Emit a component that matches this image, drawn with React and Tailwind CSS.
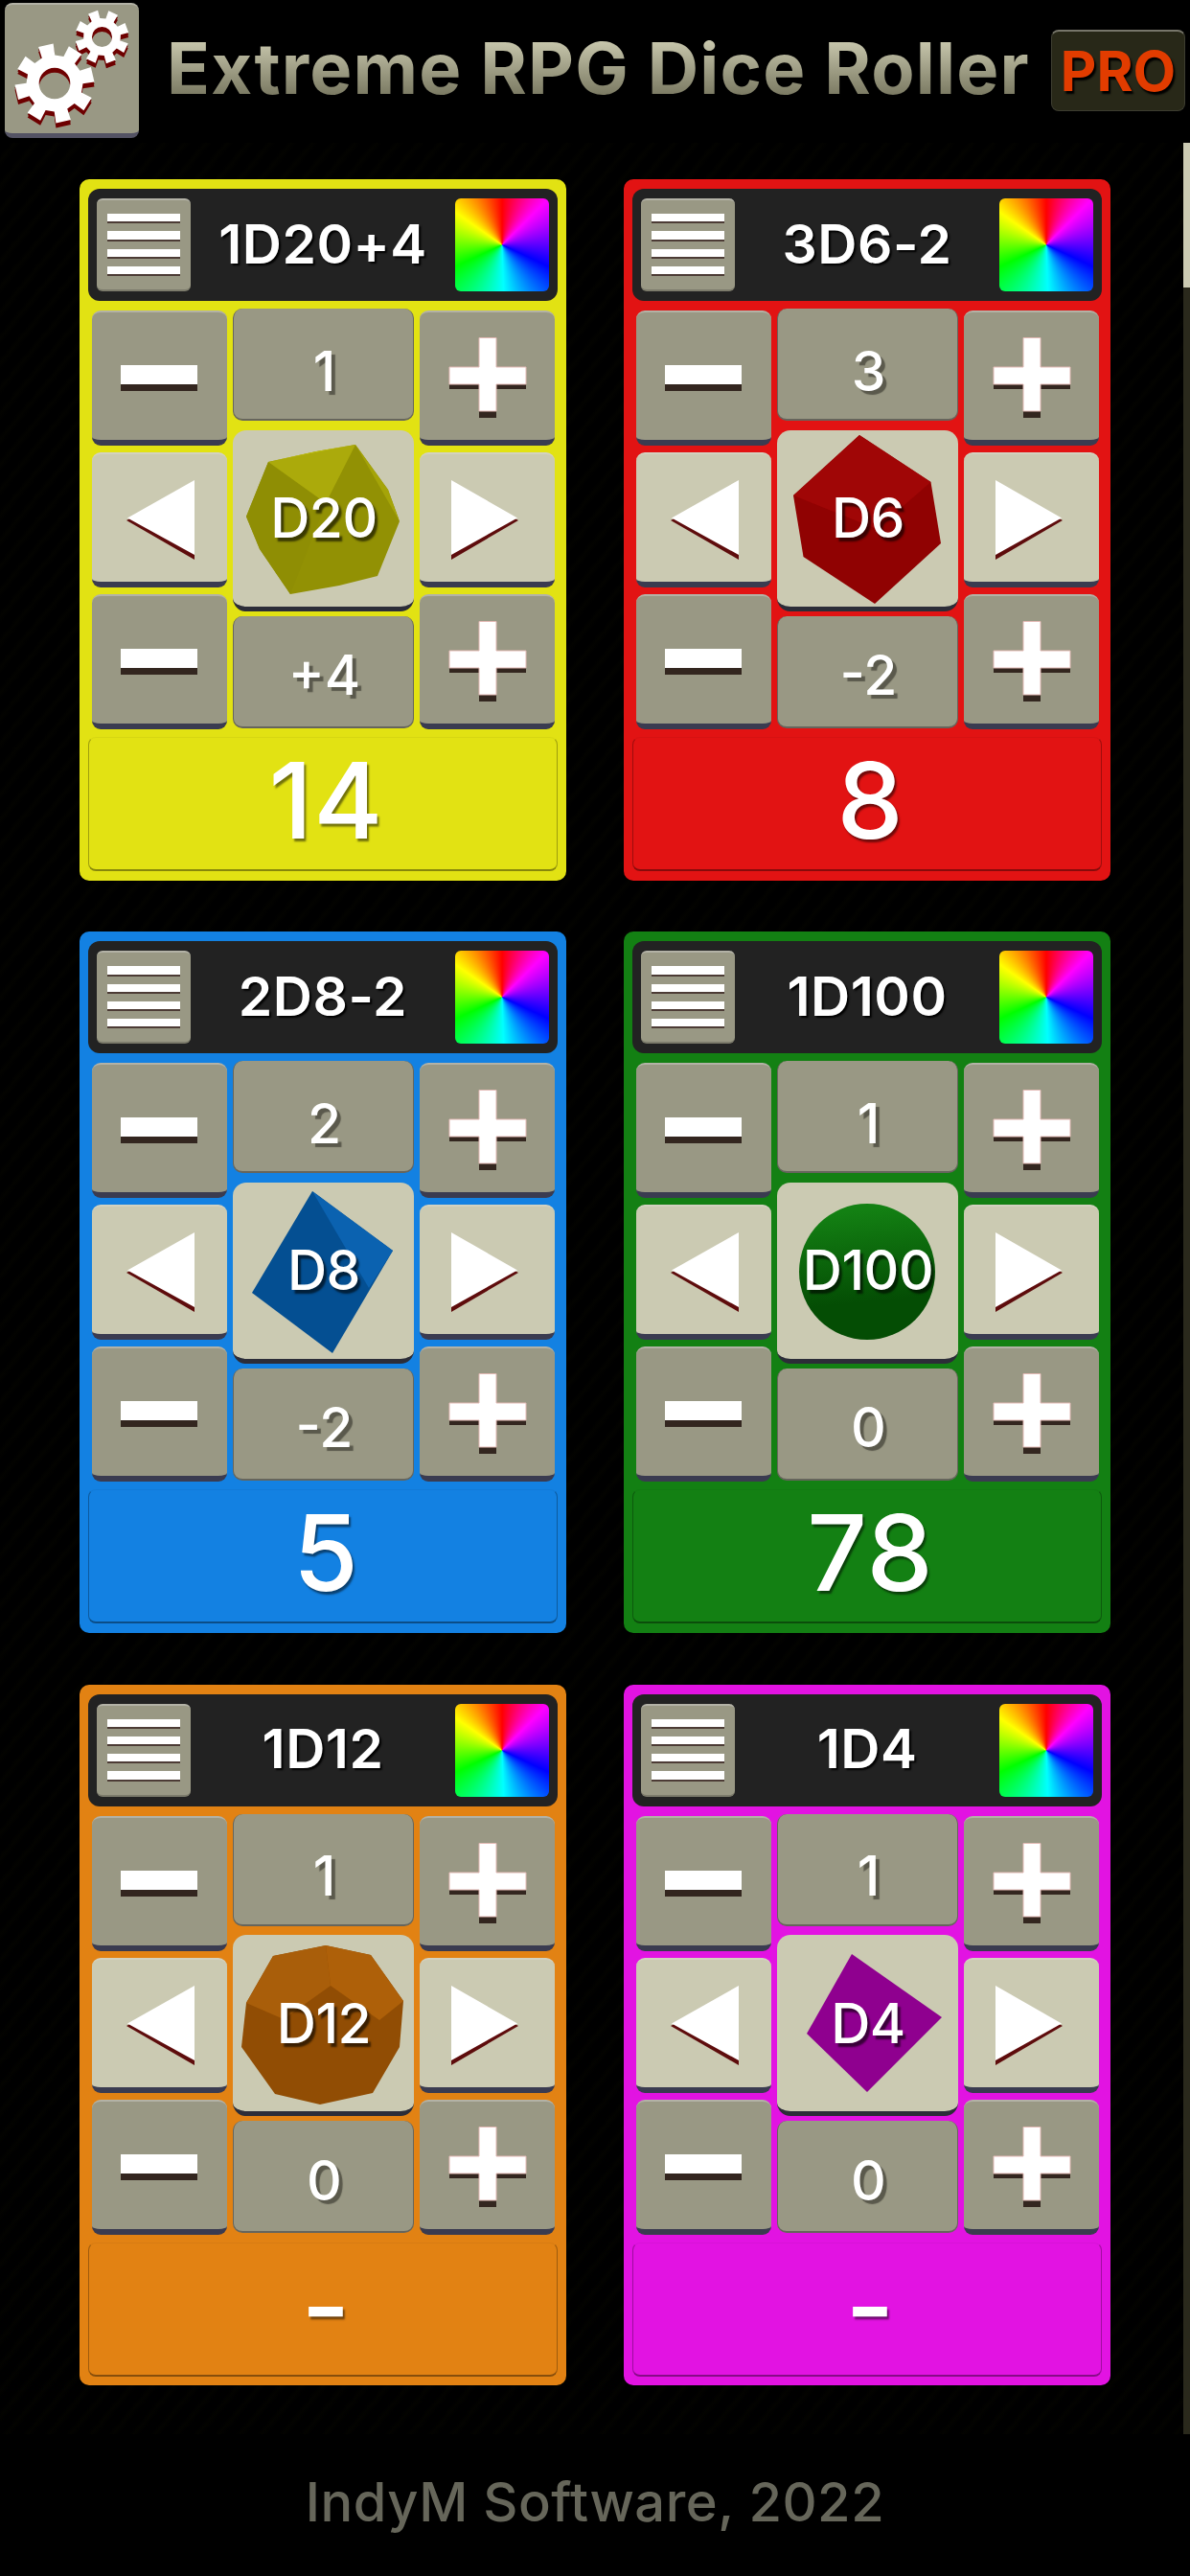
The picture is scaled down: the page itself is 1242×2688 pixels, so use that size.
import React, { useState } from "react";

const initialRollers = [
  { id: 1, name: "1D20+4", count: 1, die: "D20", modifier: "+4", result: "14", color: "#e2e213" },
  { id: 2, name: "3D6-2", count: 3, die: "D6", modifier: "-2", result: "8", color: "#e21313" },
  { id: 3, name: "2D8-2", count: 2, die: "D8", modifier: "-2", result: "5", color: "#1381e2" },
  { id: 4, name: "1D100", count: 1, die: "D100", modifier: "0", result: "78", color: "#138013" },
  { id: 5, name: "1D12", count: 1, die: "D12", modifier: "0", result: "-", color: "#e28213" },
  { id: 6, name: "1D4", count: 1, die: "D4", modifier: "0", result: "-", color: "#e213e2" },
];

// Faces of each die, on a 188 x 188 canvas
const dieFaces = {
  D20: [
    { points: "37,33 87,22 128,15 162,62 174,95 151,152 111,162 60,171 28,124 14,90", fill: "#929104" },
    { points: "37,33 97,76 60,171 28,124 14,90", fill: "#8f8e04" },
    { points: "37,33 128,15 97,76", fill: "#abaa0b" },
    { points: "37,33 87,22 128,15", fill: "#c4c30e" },
    { points: "128,15 162,62 174,95", fill: "#a5a408" },
  ],
  D6: [
    { points: "86,5 160.5,54 171,118 102,181 27.5,132 17,68", fill: "#900202" },
    { points: "86,5 160.5,54 104,103 17,68", fill: "#a00606" },
  ],
  D8: [
    { points: "83,9 167,71 104,178 20,115", fill: "#044f92" },
    { points: "83,9 167,71 142,110", fill: "#0b62b0" },
  ],
  D12: [
    { points: "97,11 144,21 178,69 174,117 146,165 91,177 44,166 9,117 14,71 42,22", fill: "#914d04" },
    { points: "97,11 102,53 53,88 14,71 42,22", fill: "#a95e0a" },
    { points: "97,11 144,21 178,69 153,89 102,53", fill: "#ae6009" },
  ],
  D4: [{ points: "78,20 172,86 94,164 31,103", fill: "#8f008f" }],
};

const Die = ({ type }) => (
  <svg viewBox="0 0 188 188" className="absolute inset-0 w-[188px] h-[188px]">
    {type === "D100" ? (
      <>
        <defs>
          <linearGradient id="sphere" x1="0.45" y1="0" x2="0.55" y2="1">
            <stop offset="0.05" stopColor="#138013" />
            <stop offset="0.72" stopColor="#044d04" />
          </linearGradient>
        </defs>
        <circle cx="94" cy="93" r="71" fill="url(#sphere)" />
      </>
    ) : (
      dieFaces[type].map((face, i) => <polygon key={i} points={face.points} fill={face.fill} />)
    )}
  </svg>
);

// Eight toothed gear with a round hole
const gearPath = (cx, cy, outer, root, hole, phase) => {
  const points = [];
  for (let i = 0; i < 8; i++) {
    const mid = phase + i * 45;
    [[-13.5, root], [-11, outer], [11, outer], [13.5, root]].forEach(([offset, r]) => {
      const a = ((mid + offset) * Math.PI) / 180;
      points.push(`${(cx + r * Math.sin(a)).toFixed(1)} ${(cy - r * Math.cos(a)).toFixed(1)}`);
    });
  }
  return `M${points.join("L")}ZM${cx - hole} ${cy}a${hole} ${hole} 0 1 0 ${hole * 2} 0a${hole} ${hole} 0 1 0 ${-hole * 2} 0Z`;
};

const GearsIcon = () => {
  const d = gearPath(52, 82, 41.5, 29.5, 16.3, -13) + gearPath(101.5, 33.5, 28, 19.5, 10.5, -20);
  return (
    <svg viewBox="0 0 140 134" className="w-[140px] h-[134px]" fillRule="evenodd">
      <path d={d} fill="#6e0000" transform="translate(0 5)" />
      <path d={d} fill="#6e0000" transform="translate(0 2.5)" />
      <path d={d} fill="#fff" />
    </svg>
  );
};

const icons = {
  minus: (
    <>
      <rect x="30" y="70" width="80" height="14" fill="#33261f" />
      <rect x="30" y="57" width="80" height="20" fill="#fff" />
    </>
  ),
  plus: (
    <>
      <path d="M31 66H62V36H80V66H111V82H80V112H62V82H31Z" fill="#33261f" />
      <path d="M31 59H62V28.500H80V59H111V77H80V105H62V77H31Z" fill="#fff" stroke="#e3b9b4" strokeWidth="1" />
    </>
  ),
  prev: (
    <>
      <path d="M36 71L107 34V112Z" fill="#5e0c0c" />
      <path d="M37 68.500L107 29V107Z" fill="#fff" />
    </>
  ),
  next: (
    <>
      <path d="M103 71L33 34V112Z" fill="#5e0c0c" />
      <path d="M102 68.500L33 29V107Z" fill="#fff" />
    </>
  ),
};

const KeyButton = ({ icon, light, onClick }) => (
  <button
    onClick={onClick}
    className={`block w-[141px] h-[141px] rounded-[9px] overflow-hidden border-t-2 border-b-[6px] border-b-[#3a3b50] ${
      light ? "bg-[#cbcab2] border-t-[#d3d2c0]" : "bg-[#999884] border-t-[#b3b2a6]"
    }`}
  >
    <svg viewBox="0 2 141 133" className="w-[141px] h-[133px]">
      {icons[icon]}
    </svg>
  </button>
);

const ValueBox = ({ value, className }) => (
  <div
    className={`flex items-center justify-center pl-[3px] h-[117px] rounded-[10px] bg-[#999884] border-b-2 border-x border-[#66655c] text-[57px] leading-none text-shadow-[4px_4px_1px_#5a594c] ${className}`}
  >
    {value}
  </div>
);

const RollerCard = ({ roller, onCount }) => (
  <div
    className="w-[508px] h-[731.5px] rounded-[10px] pt-[10px] px-[9px] font-medium text-white"
    style={{ backgroundColor: roller.color }}
  >
    {/* Title bar */}
    <div className="flex items-center justify-between h-[117px] px-[9px] rounded-[12px] bg-[#222]">
      <button className="flex flex-col items-center pt-[14px] gap-[8px] w-[98px] h-[97px] rounded-[6px] bg-[#999884] border-t-2 border-t-[#b3b2a6] border-b-2 border-b-[#7c7b6b]">
        {[0, 1, 2, 3].map((line) => (
          <span key={line} className="block w-[76px] h-[10.300px] bg-white border-b-[2.500px] border-[#4c3b35]" />
        ))}
      </button>
      <span className="pb-[3px] text-[57px] leading-none font-semibold tracking-[0.5px] text-shadow-[2px_2px_2px_#000]">
        {roller.name}
      </span>
      <button className="w-[98px] h-[97px] rounded-[6px] bg-[conic-gradient(#f00,#f0f_45deg,#00f_115deg,#0ff_178deg,#0f0_245deg,#ff0_305deg,#f00)]" />
    </div>

    {/* Controls */}
    <div className="flex justify-between pt-[8px] px-[3.500px]">
      <div className="flex flex-col gap-[7px] pt-[2px]">
        <KeyButton icon="minus" onClick={() => onCount(-1)} />
        <KeyButton icon="prev" light />
        <KeyButton icon="minus" />
      </div>
      <div className="flex flex-col w-[189px]">
        <ValueBox value={roller.count} className="pt-[15px]" />
        <button className="relative flex items-center justify-center pl-[2px] mt-[9.500px] h-[189px] rounded-[14px] bg-[#cbcab2] border-b-[5px] border-[#2c2d38]">
          <Die type={roller.die} />
          <span className="relative text-[57px] leading-none tracking-[-0.5px] text-shadow-[3px_4px_2px_rgba(0,0,0,0.6)]">
            {roller.die}
          </span>
        </button>
        <ValueBox value={roller.modifier} className="mt-[5px] pt-[9px]" />
      </div>
      <div className="flex flex-col gap-[7px] pt-[2px]">
        <KeyButton icon="plus" onClick={() => onCount(1)} />
        <KeyButton icon="next" light />
        <KeyButton icon="plus" />
      </div>
    </div>

    {/* Result */}
    <div className="flex items-center justify-center mt-[8px] h-[140px] pb-[7px] pl-[7px] rounded-[8px] border border-b-2 border-t-black/5 border-x-black/30 border-b-black/40 text-[110px] leading-none tracking-[1px] text-shadow-[2px_3px_2px_rgba(0,0,0,0.5)]">
      {roller.result}
    </div>
  </div>
);

const App = () => {
  const [rollers, setRollers] = useState(initialRollers);

  const changeCount = (id, step) => {
    setRollers(rollers.map((r) => (r.id === id ? { ...r, count: Math.max(1, r.count + step) } : r)));
  };

  return (
    <div className="flex flex-col w-[1242px] h-[2688px] bg-black overflow-hidden font-['Inter','Liberation_Sans',sans-serif]">
      {/* Header */}
      <header className="flex items-start h-[149px] pl-[5px] pt-[3px]">
        <button className="w-[140px] h-[141px] rounded-[8px] overflow-hidden bg-[#999884] border-t-2 border-t-[#b3b2a6] border-b-[5px] border-b-[#545364]">
          <GearsIcon />
        </button>
        <h1 className="w-[952px] pt-[20px] pl-[7px] text-center text-[74px] leading-[96px] font-bold tracking-[1.200px] whitespace-nowrap">
          <span className="bg-linear-to-b from-[#c6c5ab] from-20% to-[#77765f] to-85% bg-clip-text text-transparent">
            Extreme RPG Dice Roller
          </span>
        </h1>
        <div className="flex items-center justify-center mt-[28px] w-[140px] h-[85px] rounded-[8px] bg-[#282818] border-t-2 border-t-[#77766a] border-x border-b border-[#3d3d30] text-[#e23c00] text-[58px] leading-none font-bold text-shadow-[2px_3px_2px_#000]">
          PRO
        </div>
      </header>

      {/* Roller list */}
      <main className="flex justify-between h-[2391px] pl-[83px] bg-[repeating-linear-gradient(130deg,#000_0px,#000_8px,#030300_12px,#000_17px)]">
        <div className="grid grid-cols-[508px_508px] content-start gap-x-[60px] gap-y-[53.800px] pt-[38px]">
          {rollers.map((roller) => (
            <RollerCard key={roller.id} roller={roller} onCount={(step) => changeCount(roller.id, step)} />
          ))}
        </div>
        <div className="w-[7px] bg-[#2a291c]">
          <div className="h-[151px] bg-[#cbcab2]" />
        </div>
      </main>

      {/* Footer */}
      <footer className="flex justify-center pt-[37px] text-[56px] leading-[68px] font-medium tracking-[0.500px] text-[#66665a]">
        IndyM Software, 2022
      </footer>
    </div>
  );
};

export default App;
